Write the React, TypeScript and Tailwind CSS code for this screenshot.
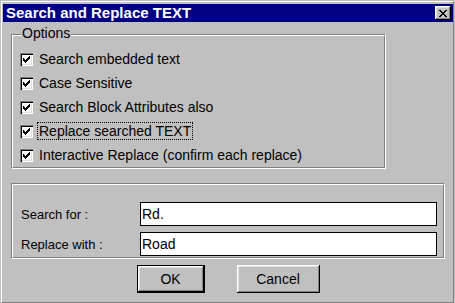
import React from "react";

const options = [
  { label: "Search embedded text", focused: false },
  { label: "Case Sensitive", focused: false },
  { label: "Search Block Attributes also", focused: false },
  { label: "Replace searched TEXT", focused: true },
  { label: "Interactive Replace (confirm each replace)", focused: false },
];

const fields = [
  { label: "Search for :", value: "Rd." },
  { label: "Replace with :", value: "Road" },
];

// classic raised bevel used by the buttons
const raised =
  "bg-[#c0c0c0] shadow-[inset_-1px_-1px_0_#000,inset_1px_1px_0_#fff,inset_-2px_-2px_0_#808080,inset_2px_2px_0_#dfdfdf]";

const CheckBox = () => (
  <span className="flex h-[13px] w-[13px] shrink-0 bg-white p-[3px] shadow-[inset_1px_1px_0_#808080,inset_2px_2px_0_#000,inset_-1px_-1px_0_#fff,inset_-2px_-2px_0_#dfdfdf]">
    <svg width="7" height="7" viewBox="0 0 7 7" shapeRendering="crispEdges">
      <path
        fill="#000"
        d="M6 0h1v1h-1z M5 1h2v1h-2z M0 2h1v1h-1z M4 2h3v1h-3z M0 3h2v1h-2z M3 3h3v1h-3z M0 4h5v1h-5z M1 5h3v1h-3z M2 6h1v1h-1z"
      />
    </svg>
  </span>
);

const CloseButton = () => (
  <button
    className={`flex h-[14px] w-[16px] items-center justify-center ${raised}`}
  >
    <svg width="8" height="7" viewBox="0 0 8 7" shapeRendering="crispEdges">
      <path
        fill="#000"
        d="M0 0h2v1h-2z M6 0h2v1h-2z M1 1h2v1h-2z M5 1h2v1h-2z M2 2h4v1h-4z M3 3h2v1h-2z M2 4h4v1h-4z M1 5h2v1h-2z M5 5h2v1h-2z M0 6h2v1h-2z M6 6h2v1h-2z"
      />
    </svg>
  </button>
);

const GroupBox: React.FC<{ className?: string; children: React.ReactNode }> = ({
  className = "",
  children,
}) => (
  <div
    className={`border-t border-l border-t-[#808080] border-l-[#808080] border-r border-b border-r-white border-b-white ${className}`}
  >
    <div className="h-full border-t border-l border-t-white border-l-white border-r border-b border-r-[#808080] border-b-[#808080]">
      {children}
    </div>
  </div>
);

export default function App() {
  return (
    <div className="h-[303px] w-[455px] bg-[#c0c0c0] pt-[1px] pl-[1px] pr-[1px] font-['Liberation_Sans',Arial,sans-serif] text-[14px] text-black">
      <div className="flex h-[302px] flex-col border-t border-l border-t-white border-l-white border-r border-b border-r-[#808080] border-b-[#808080] pl-[1px] pt-[2px]">
        {/* title bar */}
        <div className="flex h-[18px] items-center justify-between bg-[#000080] pl-[3px] pr-[2px]">
          <span className="text-[15px] font-bold leading-[18px] text-white">
            Search and Replace TEXT
          </span>
          <CloseButton />
        </div>

        <div className="flex flex-col pl-[8px]">
          {/* options */}
          <GroupBox className="relative mt-[12px] h-[135px] w-[375px]">
            <span className="absolute left-[9px] top-[-10px] bg-[#c0c0c0] px-[1px] leading-[16px]">
              Options
            </span>
            <div className="flex flex-col pt-[11px] pl-[7px]">
              {options.map((o) => (
                <div key={o.label} className="flex h-[24px] items-center">
                  <CheckBox />
                  <span
                    className={`ml-[4px] border px-[1px] leading-[16px] ${
                      o.focused ? "border-dotted border-black" : "border-transparent"
                    }`}
                  >
                    {o.label}
                  </span>
                </div>
              ))}
            </div>
          </GroupBox>

          {/* search / replace fields */}
          <GroupBox className="mt-[14px] h-[76px] w-[434px]">
            <div className="flex flex-col gap-[6px] pt-[17px] pl-[8px] pr-[6px]">
              {fields.map((f) => (
                <div key={f.label} className="flex h-[24px] items-center">
                  <span className="w-[119px] shrink-0 pt-[2px] text-[13px]">{f.label}</span>
                  <div className="flex h-[24px] flex-1 items-center border border-black bg-white pl-[1px]">
                    {f.value}
                  </div>
                </div>
              ))}
            </div>
          </GroupBox>

          {/* buttons */}
          <div className="mt-[6px] flex w-[434px] justify-center gap-[32px]">
            <button className="h-[28px] w-[68px] border border-black">
              <span className={`flex h-full w-full items-center justify-center ${raised}`}>
                OK
              </span>
            </button>
            <button
              className={`flex h-[28px] w-[83px] items-center justify-center ${raised}`}
            >
              Cancel
            </button>
          </div>
        </div>
      </div>
    </div>
  );
}
